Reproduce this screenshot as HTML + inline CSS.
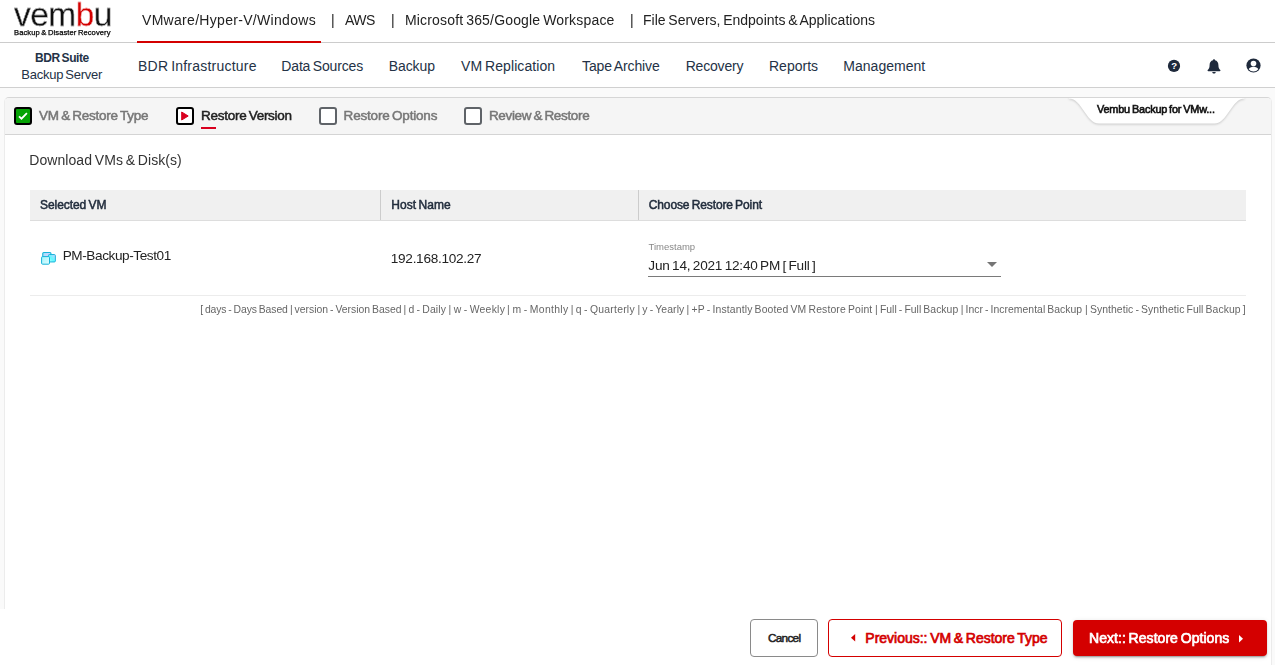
<!DOCTYPE html>
<html lang="en">
<head>
<meta charset="utf-8">
<title>Vembu BDR Suite - Restore Version</title>
<style>
*{box-sizing:border-box;margin:0;padding:0}
html,body{width:1275px;height:665px;overflow:hidden}
body{position:relative;background:#fafafa;font-family:"Liberation Sans",sans-serif;font-size:14px;color:#222;-webkit-font-smoothing:antialiased}
.abs{position:absolute;white-space:nowrap;line-height:1;word-spacing:-0.085em}
.fb{-webkit-text-stroke:0.5px currentColor}
#bp,#bn{-webkit-text-stroke:0.7px currentColor}
#ptxt{-webkit-text-stroke:0.6px currentColor;color:#111 !important}
/* top bar */
#topbar{position:absolute;left:0;top:0;width:1275px;height:43px;background:#fff;border-bottom:1px solid #ccc}
#logo{will-change:transform;left:14px;top:-2.2px;font-size:33.5px;letter-spacing:-0.55px;color:transparent;background:linear-gradient(90deg,#111 0,#111 62.4px,#d40000 62.4px,#d40000 80.3px,#111 80.3px);-webkit-background-clip:text;background-clip:text;-webkit-text-stroke:0.3px #fff}
#tagline{will-change:transform;left:13.5px;top:28.9px;font-size:7.6px;letter-spacing:0.07px;color:#000;-webkit-text-stroke:0.25px #000}
.ttab{will-change:transform;top:13px;font-size:14px;color:#222}
#tabline{position:absolute;left:137px;top:41px;width:184px;height:2px;background:#d40000}
/* nav */
#nav{position:absolute;left:0;top:43px;width:1275px;height:45px;background:#fff;border-bottom:1px solid #d0d0d0}
.nv{top:16px;font-size:14px;color:#243246}
#bdr1{top:9px;font-size:12px;color:#243246}
#bdr2{top:24px;font-size:13px;color:#243246}
/* panel */
#panel{will-change:transform;position:absolute;left:4px;top:97px;width:1268px;height:600px;background:#fff;border:1px solid #ececec;border-top-color:#d6d6d6;border-radius:5px 5px 0 0;overflow:hidden}
#phead{position:absolute;left:0;top:0;width:100%;height:37px;background:#f5f5f5;border-bottom:1px solid #d4d4d4}
.cb{position:absolute;top:9px;width:18px;height:18px;border-radius:3px}
.step{top:11.2px;font-size:13.5px;color:#777}
.lg{top:206.6px;font-size:10.4px;color:#666;letter-spacing:0.1px}
#footer{position:absolute;left:0;top:609px;width:1271px;height:56px;background:#fff}
.btn{position:absolute;top:619px;height:38px;border-radius:4px}
/*AUTO*/
#t1{letter-spacing:0.305px;margin-left:-0.2px;margin-top:0px}
#t2{letter-spacing:-0.5px;margin-left:0.0px;margin-top:0px}
#t3{letter-spacing:0.172px;margin-left:-0.8px;margin-top:0px}
#t4{letter-spacing:0.005px;margin-left:-1.0px;margin-top:0px}
#bdr1{letter-spacing:-0.414px;margin-left:-0.6px;margin-top:0.15px}
#bdr2{letter-spacing:-0.259px;margin-left:-0.2px;margin-top:1.3px}
#n1{letter-spacing:0.218px;margin-left:-0.5px;margin-top:0px}
#n2{letter-spacing:-0.164px;margin-left:-1.2px;margin-top:0px}
#n3{letter-spacing:-0.08px;margin-left:-0.8px;margin-top:0px}
#n4{letter-spacing:0.092px;margin-left:0.0px;margin-top:0px}
#n5{letter-spacing:-0.109px;margin-left:0.0px;margin-top:0px}
#n6{letter-spacing:-0.2px;margin-left:-0.8px;margin-top:0px}
#n7{letter-spacing:0.0px;margin-left:-1.0px;margin-top:0px}
#n8{letter-spacing:0.023px;margin-left:-1.2px;margin-top:0px}
#st1{letter-spacing:-0.252px;margin-left:-0.4px;margin-top:0px}
#st2{letter-spacing:-0.285px;margin-left:-0.4px;margin-top:0px}
#st3{letter-spacing:-0.186px;margin-left:-0.4px;margin-top:0px}
#st4{letter-spacing:-0.333px;margin-left:-0.6px;margin-top:0px}
#ptxt{letter-spacing:-0.181px;margin-left:0.0px;margin-top:0.85px}
#ttl{letter-spacing:0.057px;margin-left:-1.2px;margin-top:0.0px}
#h1{letter-spacing:-0.06px;margin-left:0.0px;margin-top:0px}
#h2{letter-spacing:0.055px;margin-left:-0.2px;margin-top:0px}
#h3{letter-spacing:-0.106px;margin-left:-0.8px;margin-top:0px}
#vmn{letter-spacing:-0.414px;margin-left:0.2px;margin-top:0.95px}
#ip{letter-spacing:-0.284px;margin-left:0.3px;margin-top:1.7px}
#tsl{letter-spacing:0.0px;margin-left:0.0px;margin-top:2.1px}
#tsv{letter-spacing:-0.2px;margin-left:-0.2px;margin-top:2.0px}
#bc{letter-spacing:-0.68px;margin-left:0.4px;margin-top:0.5px}
#bp{letter-spacing:-0.012px;margin-left:-0.2px;margin-top:-0.5px}
#bn{letter-spacing:0.048px;margin-left:-1.0px;margin-top:-0.5px}
#lg0{letter-spacing:-0.1px;margin-left:-0.2px;margin-top:0px}
#lg1{letter-spacing:-0.009px;margin-left:-0.4px;margin-top:0px}
#lg2{letter-spacing:0.14px;margin-left:-1.0px;margin-top:0px}
#lg3{letter-spacing:0.255px;margin-left:-1.0px;margin-top:0px}
#lg4{letter-spacing:0.316px;margin-left:-0.6px;margin-top:0px}
#lg5{letter-spacing:0.229px;margin-left:-0.2px;margin-top:0px}
#lg6{letter-spacing:0.109px;margin-left:-0.4px;margin-top:0px}
#lg7{letter-spacing:0.138px;margin-left:-0.6px;margin-top:0px}
#lg8{letter-spacing:0.042px;margin-left:-0.6px;margin-top:0px}
#lg9{letter-spacing:0.039px;margin-left:-0.2px;margin-top:0px}
#lg10{letter-spacing:0.072px;margin-left:-0.6px;margin-top:0px}
/*END*/
</style>
</head>
<body>

<div id="topbar">
  <div id="logo" class="abs">vembu</div>
  <div id="tagline" class="abs">Backup &amp; Disaster Recovery</div>
  <div id="t1" class="abs ttab" style="left:142.5px">VMware/Hyper-V/Windows</div>
  <div id="s1" class="abs ttab" style="left:331px">|</div>
  <div id="t2" class="abs ttab" style="left:345px">AWS</div>
  <div id="s2" class="abs ttab" style="left:391px">|</div>
  <div id="t3" class="abs ttab" style="left:405.5px">Microsoft 365/Google Workspace</div>
  <div id="s3" class="abs ttab" style="left:630px">|</div>
  <div id="t4" class="abs ttab" style="left:644px">File Servers, Endpoints &amp; Applications</div>
  <div id="tabline"></div>
</div>

<div id="nav">
  <div id="bdr1" class="abs" style="left:35.5px;font-weight:bold">BDR Suite</div>
  <div id="bdr2" class="abs" style="left:21.5px">Backup Server</div>
  <div id="n1" class="abs nv" style="left:138.5px">BDR Infrastructure</div>
  <div id="n2" class="abs nv" style="left:282.5px">Data Sources</div>
  <div id="n3" class="abs nv" style="left:389.5px">Backup</div>
  <div id="n4" class="abs nv" style="left:461px">VM Replication</div>
  <div id="n5" class="abs nv" style="left:582px">Tape Archive</div>
  <div id="n6" class="abs nv" style="left:686.5px">Recovery</div>
  <div id="n7" class="abs nv" style="left:770px">Reports</div>
  <div id="n8" class="abs nv" style="left:844.5px">Management</div>
</div>

<div id="panel">
  <div id="phead">
    <div class="cb" style="left:9px;background:#05a305;border:2px solid #000">
      <svg width="14" height="14" viewBox="0 0 14 14" style="position:absolute;left:0;top:0"><path d="M3 7.3 L5.5 9.7 L10.9 4.1" fill="none" stroke="#fff" stroke-width="1.8"/></svg>
    </div>
    <div id="st1" class="abs step fb" style="left:34.5px">VM &amp; Restore Type</div>
    <div class="cb" style="left:171px;background:#fff;border:2px solid #000">
      <svg width="14" height="14" viewBox="0 0 14 14" style="position:absolute;left:0;top:0"><path d="M3.7 3 L10.2 7 L3.7 11 Z" fill="#d9001f" stroke="#d9001f" stroke-width="1" stroke-linejoin="round"/></svg>
    </div>
    <div id="st2" class="abs step fb" style="left:196.5px;color:#222">Restore Version</div>
    <div style="position:absolute;left:196px;top:29px;width:15px;height:2px;background:#d9001f"></div>
    <div class="cb" style="left:314px;background:#fff;border:2px solid #5f6368"></div>
    <div id="st3" class="abs step fb" style="left:339px">Restore Options</div>
    <div class="cb" style="left:459px;background:#fff;border:2px solid #5f6368"></div>
    <div id="st4" class="abs step fb" style="left:484.5px">Review &amp; Restore</div>
    <svg id="ptab" width="180" height="32" viewBox="0 0 180 32" style="position:absolute;left:1064px;top:0;overflow:visible;filter:drop-shadow(0 1px 1px rgba(0,0,0,.18))">
      <path d="M0 -1 L0 0.4 C13 0.4 17 25.4 30 25.4 L145.5 25.4 C158.5 25.4 162.5 0.4 175.5 0.4 L175.5 -1 Z" fill="#fff"/>
    </svg>
    <div id="ptxt" class="abs fb" style="left:1092px;top:5.6px;font-size:10.9px;color:#222">Vembu Backup for VMw...</div>
  </div>

  <div id="ttl" class="abs" style="left:25.5px;top:55px;font-size:14px;color:#333">Download VMs &amp; Disk(s)</div>

  <div id="thead" style="position:absolute;left:25px;top:92px;width:1216px;height:31px;background:#f0f0f0;border-bottom:1px solid #ddd">
    <div style="position:absolute;left:350px;top:0;width:1px;height:30px;background:#ccc"></div>
    <div style="position:absolute;left:608px;top:0;width:1px;height:30px;background:#ccc"></div>
    <div id="h1" class="abs fb" style="left:10px;top:9px;font-size:12px;color:#222d3d">Selected VM</div>
    <div id="h2" class="abs fb" style="left:361.5px;top:9px;font-size:12px;color:#222d3d">Host Name</div>
    <div id="h3" class="abs fb" style="left:619.5px;top:9px;font-size:12px;color:#222d3d">Choose Restore Point</div>
  </div>
  <div id="trow" style="position:absolute;left:25px;top:123px;width:1216px;height:75px;border-bottom:1px solid #ececec">
    <svg id="vmico" width="17" height="16" viewBox="0 0 17 16" style="position:absolute;left:10px;top:29px">
      <defs><linearGradient id="g1" x1="0" y1="0" x2="1" y2="1"><stop offset="0" stop-color="#8fe9f7"/><stop offset="0.5" stop-color="#cfd0ff"/><stop offset="1" stop-color="#9ff"/></linearGradient>
      <linearGradient id="g2" x1="1" y1="0" x2="0" y2="1"><stop offset="0" stop-color="#d4ccff"/><stop offset="0.55" stop-color="#5ffcff"/><stop offset="1" stop-color="#c8fbff"/></linearGradient>
      <linearGradient id="g3" x1="0" y1="0" x2="1" y2="1"><stop offset="0" stop-color="#9ff3fb"/><stop offset="1" stop-color="#e2fdff"/></linearGradient></defs>
      <rect x="2.75" y="2.55" width="8.2" height="7" rx="1" fill="url(#g1)" stroke="#16b2d9" stroke-width="1.1"/>
      <rect x="8.45" y="4.55" width="6.9" height="7.4" rx="1" fill="url(#g2)" stroke="#16b2d9" stroke-width="1"/>
      <rect x="1.6" y="6.6" width="7.9" height="7.6" rx="1" fill="url(#g3)" stroke="#16b2d9" stroke-width="1"/>
    </svg>
    <div id="vmn" class="abs" style="left:32.5px;top:27px;font-size:13.6px;color:#222">PM-Backup-Test01</div>
    <div id="ip" class="abs" style="left:360.5px;top:29px;font-size:13.6px;color:#222">192.168.102.27</div>
    <div id="tsl" class="abs" style="left:618.5px;top:19px;font-size:9.5px;color:#888">Timestamp</div>
    <div id="tsv" class="abs" style="left:618.5px;top:36px;font-size:13.6px;color:#222">Jun 14, 2021 12:40 PM [ Full ]</div>
    <div style="position:absolute;left:618px;top:55px;width:353px;height:1px;background:#7a7a7a"></div>
    <svg width="10" height="5" viewBox="0 0 10 5" style="position:absolute;left:956.5px;top:41px"><path d="M0 0 L10 0 L5 5 Z" fill="#757575"/></svg>
  </div>
    <div id="lg0" class="abs lg" style="left:195.4px">[ days - Days Based</div>
  <div id="lg1" class="abs lg" style="left:285.3px">| version - Version Based</div>
  <div id="lg2" class="abs lg" style="left:399.5px">| d - Daily</div>
  <div id="lg3" class="abs lg" style="left:444.5px">| w - Weekly</div>
  <div id="lg4" class="abs lg" style="left:502.7px">| m - Monthly</div>
  <div id="lg5" class="abs lg" style="left:565.9px">| q - Quarterly</div>
  <div id="lg6" class="abs lg" style="left:632.8px">| y - Yearly</div>
  <div id="lg7" class="abs lg" style="left:682.2px">| +P - Instantly Booted VM Restore Point</div>
  <div id="lg8" class="abs lg" style="left:870.7px">| Full - Full Backup</div>
  <div id="lg9" class="abs lg" style="left:955.9px">| Incr - Incremental Backup</div>
  <div id="lg10" class="abs lg" style="left:1080.7px">| Synthetic - Synthetic Full Backup ]</div>
</div>

<div id="footer"></div>
<div class="btn" style="left:750px;width:68px;border:1px solid #8a8a8a;background:#fff"></div>
<div id="bc" class="abs fb" style="left:767.5px;top:631.8px;font-size:11.75px;color:#222">Cancel</div>
<div class="btn" style="left:828px;width:234px;border:1px solid #d40000;background:#fff"></div>
<svg width="5" height="8" viewBox="0 0 5 8" style="position:absolute;left:850.8px;top:634.2px"><path d="M4.2 0 L4.2 7.6 L0 3.8 Z" fill="#d40000"/></svg>
<div id="bp" class="abs fb" style="left:865.5px;top:631px;font-size:14px;color:#d40000">Previous:: VM &amp; Restore Type</div>
<div class="btn" style="left:1072.5px;top:620px;width:194px;height:36px;background:#d40000;box-shadow:0 3px 1px -2px rgba(0,0,0,.2),0 2px 2px 0 rgba(0,0,0,.14),0 1px 5px 0 rgba(0,0,0,.12)"></div>
<div id="bn" class="abs fb" style="left:1090px;top:631px;font-size:14px;color:#fff">Next:: Restore Options</div>
<svg width="5" height="8" viewBox="0 0 5 8" style="position:absolute;left:1239.3px;top:635.2px"><path d="M0 0 L0 7.4 L4 3.7 Z" fill="#fff"/></svg>

<!-- nav icons -->
<svg width="14" height="14" viewBox="0 0 14 14" style="position:absolute;left:1167px;top:59px"><circle cx="7" cy="6.9" r="6.1" fill="#1f2a3c"/></svg>
<div id="qm" class="abs" style="left:1171.2px;top:61.2px;font-size:9.6px;font-weight:bold;color:#fff">?</div>
<svg width="14" height="15" viewBox="0 0 14 15" style="position:absolute;left:1206.7px;top:58.9px"><path d="M7 0.3 C7.6 0.3 8 0.7 8 1.3 C10.2 1.8 11.4 3.6 11.4 6 C11.4 9 12.3 10.1 13.3 11.1 C13.7 11.6 13.4 12.3 12.7 12.3 L1.3 12.3 C0.6 12.3 0.3 11.6 0.7 11.1 C1.7 10.1 2.6 9 2.6 6 C2.6 3.6 3.8 1.8 6 1.3 C6 0.7 6.4 0.3 7 0.3 Z M5.3 12.9 L8.7 12.9 C8.7 13.9 7.9 14.5 7 14.5 C6.1 14.5 5.3 13.9 5.3 12.9 Z" fill="#1f2a3c"/></svg>
<svg width="15" height="15" viewBox="0 0 15 15" style="position:absolute;left:1246.1px;top:58.3px"><circle cx="7.5" cy="7.5" r="7.1" fill="#1f2a3c"/><circle cx="7.5" cy="5.6" r="2.8" fill="#fff"/><path d="M2.7 11.2 C3.1 9.4 5.3 8.9 7.5 8.9 C9.7 8.9 11.9 9.4 12.3 11.2 A6.1 6.1 0 0 1 2.7 11.2 Z" fill="#fff"/></svg>
</body>
</html>
